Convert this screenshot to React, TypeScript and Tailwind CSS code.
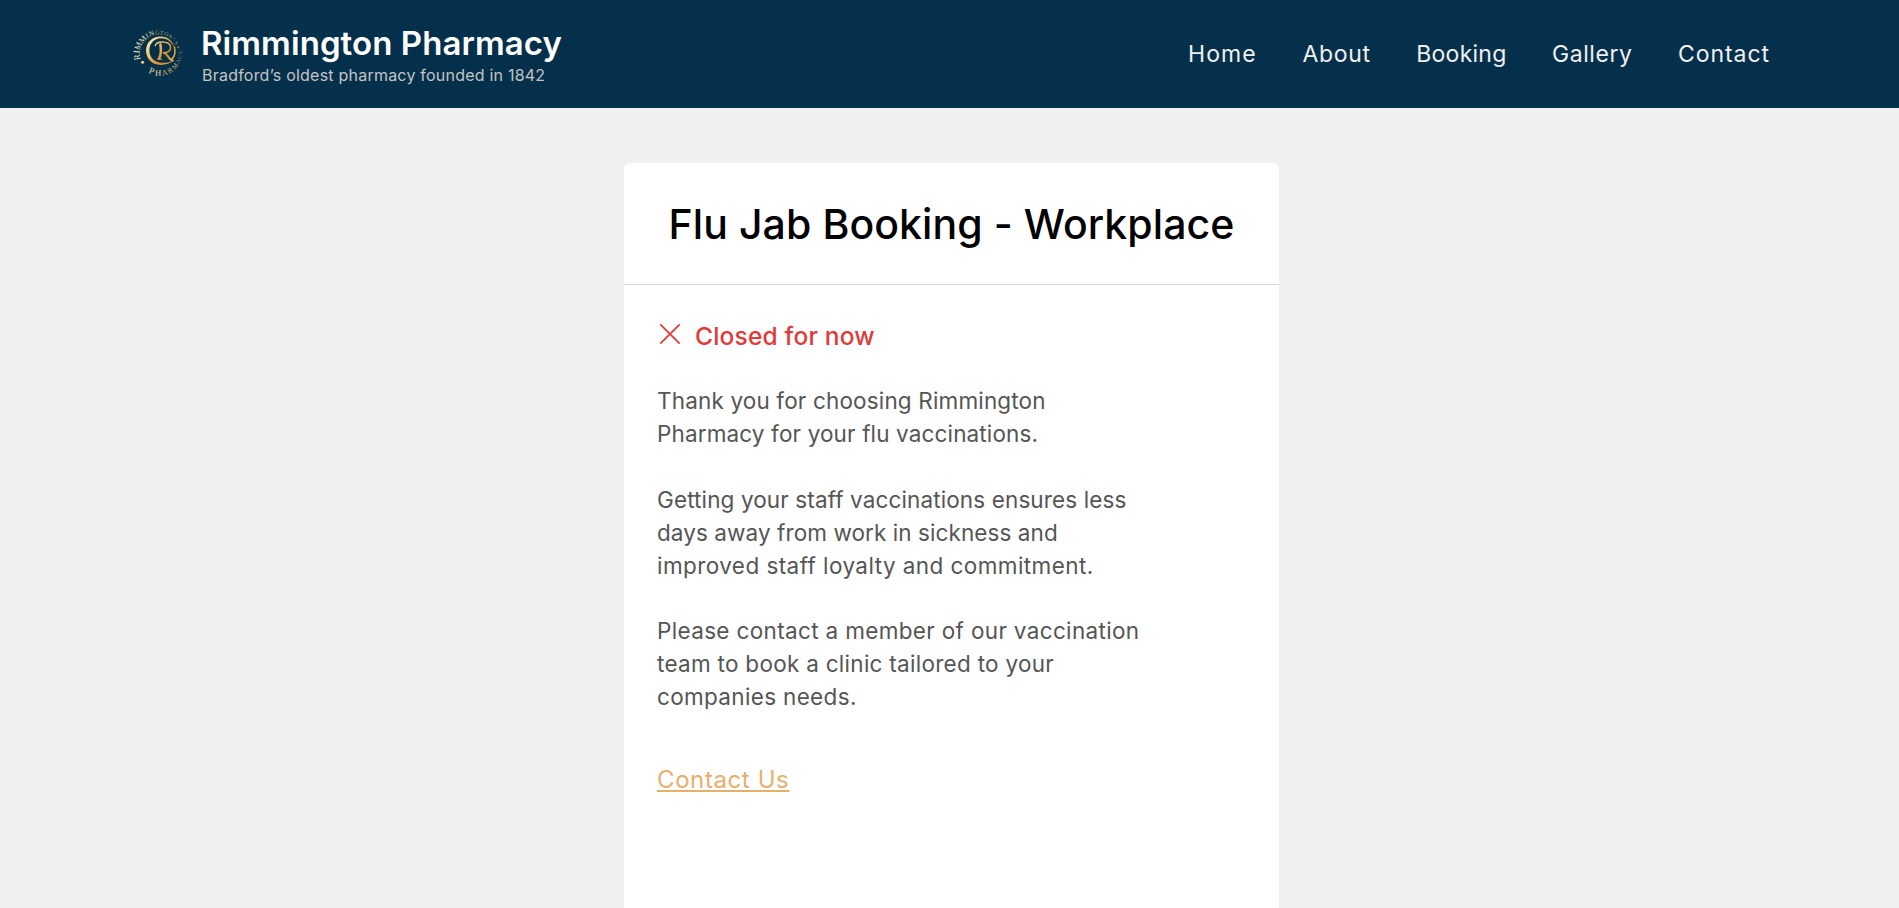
type Glyph = [char: string, x: number, y: number, size: number];

const CENTER = { x: 28.6, y: 26 };

const upperRing: Glyph[] = [
  ['R', 7.2, 29.4, 9], ['I', 6.6, 24, 9], ['M', 8.3, 18.2, 8.6], ['M', 12.6, 11.6, 8],
  ['I', 17, 7.8, 7.2], ['N', 21.4, 5.6, 6.8], ['G', 27.2, 4.7, 6.2], ['T', 31.8, 5, 5.8],
  ['O', 36.2, 6.4, 5.6], ['N', 40.4, 8.8, 5.4], ['’', 43.4, 11.6, 5.2], ['S', 46.2, 15.2, 5.2],
];

const lowerRing: Glyph[] = [
  ['P', 21.8, 43.2, 9], ['H', 28.2, 45.3, 8.6], ['A', 34.8, 44.9, 8], ['R', 40.2, 42.6, 7.4],
  ['M', 45, 38.4, 6.8], ['A', 48.2, 33.6, 5.8], ['C', 49.8, 29.2, 5.4], ['Y', 50.4, 24.8, 5],
];

function angleOf(x: number, y: number) {
  return (Math.atan2(y - CENTER.y, x - CENTER.x) * 180) / Math.PI;
}

function RingText({ glyphs, turn }: { glyphs: Glyph[]; turn: number }) {
  return (
    <>
      {glyphs.map(([char, x, y, size], i) => (
        <text
          key={i}
          x={x}
          y={y + size * 0.33}
          fontSize={size}
          textAnchor="middle"
          transform={`rotate(${angleOf(x, y) + turn} ${x} ${y})`}
        >
          {char}
        </text>
      ))}
    </>
  );
}

function Logo() {
  return (
    <svg viewBox="0 0 54 54" className="h-[54px] w-[54px] shrink-0 overflow-visible font-['Liberation_Serif',serif]">
      <defs>
        <linearGradient id="gold" gradientUnits="userSpaceOnUse" x1="16" y1="14" x2="44" y2="38">
          <stop offset="0" stopColor="#fff0b0" />
          <stop offset="0.35" stopColor="#e9bd62" />
          <stop offset="0.7" stopColor="#d98c1c" />
          <stop offset="1" stopColor="#f0c469" />
        </linearGradient>
      </defs>
      <g transform="translate(0 0.8)">
        <g fill="#f0e4b8">
          <RingText glyphs={upperRing.slice(0, 6)} turn={90} />
        </g>
        <g fill="#a5a188">
          <RingText glyphs={upperRing.slice(6)} turn={90} />
        </g>
        <g fill="#f3e0a6">
          <RingText glyphs={lowerRing.slice(0, 2)} turn={-90} />
        </g>
        <g fill="#d5b06a">
          <RingText glyphs={lowerRing.slice(2, 5)} turn={-90} />
        </g>
        <g fill="#9f8f62">
          <RingText glyphs={lowerRing.slice(5)} turn={-90} />
        </g>
      </g>
      <circle cx="12.6" cy="35.3" r="1.5" fill="#f3cf83" />
      <circle cx="48.2" cy="20.4" r="0.8" fill="#b79a58" />
      <path
        fill="url(#gold)"
        fillRule="evenodd"
        d="M44.6 21.5C43.4 14 37.6 9.4 30.6 9.4C22.4 9.4 16 15.4 16 23.6C16 31.9 22.2 38 30.4 38C36 38 40.4 36.2 43.8 33.6C40 35.6 36.2 36 32.2 35.8C24.6 35.4 19.4 30.4 19.4 23.4C19.4 16.4 24.4 11.2 31 11.2C37.4 11.2 42.2 15.2 44.6 21.5Z"
      />
      <g fill="none" stroke="url(#gold)" strokeLinecap="round">
        <path strokeWidth="1.5" d="M25.3 18.6C25.8 16 28.4 14.9 32.2 14.9C37.4 14.9 40.6 16.8 40.6 20.4C40.6 23.8 37.6 25.6 33.4 25.8" />
        <path strokeWidth="2.5" d="M30.4 17.4C31.2 22 31 27.6 29.2 31.6" />
        <path strokeWidth="1.3" d="M27.6 32.2L31.4 32.2" />
        <path strokeWidth="2.2" d="M34.6 26.2C38 27 38.2 32.6 42.6 33.6" />
        <path strokeWidth="1.6" d="M44.5 20C45.6 25.4 44.6 29.4 42 32" />
      </g>
    </svg>
  );
}

const navItems = [
  { label: 'Home', spacing: 'tracking-[1.1px]' },
  { label: 'About', spacing: 'tracking-[0.7px]' },
  { label: 'Booking', spacing: 'tracking-[0.25px]' },
  { label: 'Gallery', spacing: 'tracking-[0.55px]' },
  { label: 'Contact', spacing: 'tracking-[0.95px]' },
];

const firstParagraph = [
  { text: 'Thank you for choosing Rimmington', spacing: 'tracking-[0.16px]' },
  { text: 'Pharmacy for your flu vaccinations.', spacing: 'tracking-[0.14px]' },
];

const secondParagraph = [
  { text: 'Getting your staff vaccinations ensures less', spacing: 'tracking-[0.12px]' },
  { text: 'days away from work in sickness and', spacing: 'tracking-[0.08px]' },
  { text: 'improved staff loyalty and commitment.', spacing: 'tracking-[0.43px]' },
];

const thirdParagraph = [
  { text: 'Please contact a member of our vaccination', spacing: 'tracking-[0.34px]' },
  { text: 'team to book a clinic tailored to your', spacing: 'tracking-[0.28px]' },
  { text: 'companies needs.', spacing: 'tracking-[0.33px]' },
];

function Paragraph({ lines }: { lines: { text: string; spacing: string }[] }) {
  return (
    <p className="text-[22.5px] leading-[33px] whitespace-nowrap text-[#555555]">
      {lines.map((line) => (
        <span key={line.text} className={`block ${line.spacing}`}>
          {line.text}
        </span>
      ))}
    </p>
  );
}

export default function App() {
  return (
    <div className="flex h-screen flex-col overflow-hidden bg-[#f0f0f0] font-[Inter,sans-serif]">
      <header className="flex h-[108px] shrink-0 items-center justify-between bg-[#05304b] pr-[129px] pl-[130px]">
        <a className="flex items-center gap-[17px]">
          <Logo />
          <div className="flex flex-col gap-0.5 whitespace-nowrap">
            <span className="text-[33px] leading-10 font-semibold tracking-[0.08px] text-white">
              Rimmington Pharmacy
            </span>
            <span className="pl-px text-base leading-5 tracking-[0.22px] text-[#c4c4c4]">
              Bradford’s oldest pharmacy founded in 1842
            </span>
          </div>
        </a>
        <nav className="flex items-center gap-[45.5px]">
          {navItems.map((item) => (
            <a key={item.label} className={`text-[23px] leading-8 text-[#f0f0f0] ${item.spacing}`}>
              {item.label}
            </a>
          ))}
        </nav>
      </header>

      <main className="flex min-h-0 grow justify-center pt-[55px] pl-1">
        <section className="w-[655px] rounded-t-md bg-white">
          <div className="border-b border-[#d6d6d6] pt-[31px] pb-[30px] text-center">
            <h1 className="text-[41px] leading-[60px] font-medium tracking-[0.08px] whitespace-nowrap text-black">
              Flu Jab Booking - Workplace
            </h1>
          </div>
          <div className="pt-[33px] pl-[33px]">
            <div className="mb-[30px] flex items-center gap-[12px] text-[#e03a3a]">
              <svg viewBox="0 0 26 26" className="-mt-1 h-[26px] w-[26px]" fill="none" stroke="currentColor" strokeWidth="1.7">
                <path d="M3.3 3.3L22.7 22.7M22.7 3.3L3.3 22.7" />
              </svg>
              <h2 className="text-[24.5px] leading-9 font-medium tracking-[0.2px]">Closed for now</h2>
            </div>
            <Paragraph lines={firstParagraph} />
            <div className="mt-[33px]">
              <Paragraph lines={secondParagraph} />
            </div>
            <div className="mt-8">
              <Paragraph lines={thirdParagraph} />
            </div>
            <a className="mt-[49px] inline-block text-2xl leading-9 tracking-[0.6px] text-[#e5b06c] underline decoration-2 underline-offset-[2px]">
              Contact Us
            </a>
          </div>
        </section>
      </main>
    </div>
  );
}
